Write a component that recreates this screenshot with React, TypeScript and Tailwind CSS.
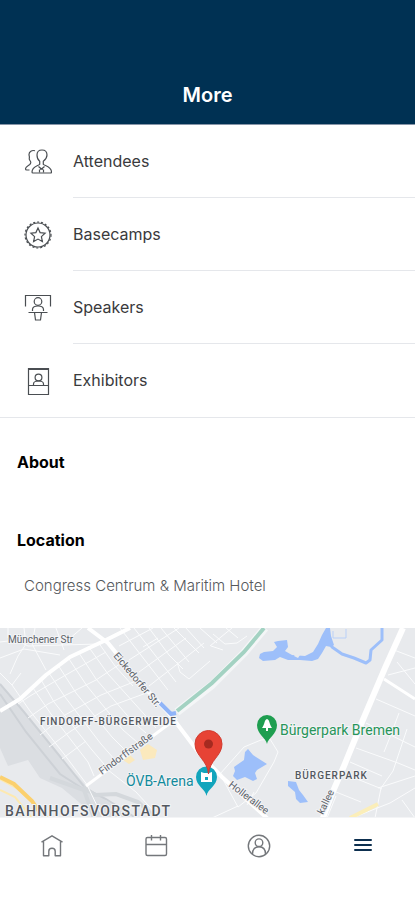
import React, { useState } from 'react';

interface IconProps {
  className?: string;
}

interface MenuItem {
  label: string;
  icon: React.FC<IconProps>;
}

const AttendeesIcon: React.FC<IconProps> = ({ className }) => (
  <svg className={className} viewBox="0 0 28 28" fill="none" stroke="currentColor" strokeWidth="1.200" strokeLinejoin="round" aria-hidden="true">
    <path d="M18 2c-3 0-5 2-5 5 0 2.600.8 4.800 2.700 6.300v3c-1.500 1.500-7.700 2-7.700 7.700 0 .7.400 1 1 1h17.500c.6 0 1-.3 1-1 0-5.700-6.700-6.200-8.200-7.700v-3C21.200 11.800 23 9.600 23 7c0-3-2-5-5-5z" />
    <path d="M11 2.800C8 1.800 5 3.500 5 6.500c0 1.500.8 2.300.3 3.500-.5 1.300.2 2 1 3 1 1.200.4 2.800-.8 3.700-2 1.300-4 2-4 4 0 .8.500 1.300 1.300 1.300h2.700" />
    <path d="M14.500 18.500l3 2.500 3-2.500M16 21.200h3M15.500 24.500v-3M19.500 24.500v-3" />
  </svg>
);

const BasecampsIcon: React.FC<IconProps> = ({ className }) => (
  <svg className={className} viewBox="0 0 28 28" fill="none" stroke="currentColor" strokeWidth="1.200" aria-hidden="true">
    <circle cx="14" cy="14" r="12" />
    <circle cx="14" cy="14" r="13" strokeDasharray="2 2" />
    <path d="M14 7l2.100 4.600 5 .6-3.700 3.400 1 5-4.400-2.500-4.400 2.500 1-5-3.700-3.400 5-.6z" />
  </svg>
);

const SpeakersIcon: React.FC<IconProps> = ({ className }) => (
  <svg className={className} viewBox="0 0 28 28" fill="none" stroke="currentColor" strokeWidth="1.200" aria-hidden="true">
    <path d="M1.500 12.500V1.500h25v11" />
    <circle cx="14" cy="7.500" r="3.800" />
    <path d="M8.500 17v-1.500c0-2 2-3.500 5.500-3.500s5.500 1.500 5.500 3.500V17M4.500 18.500h19M10.500 18.500l1 7.500h5l1-7.500" />
  </svg>
);

const ExhibitorsIcon: React.FC<IconProps> = ({ className }) => (
  <svg className={className} viewBox="0 0 28 28" fill="none" stroke="currentColor" strokeWidth="1.200" aria-hidden="true">
    <path d="M4.500 27.500V1.500h20v26zM4.500 18.500h20" />
    <path d="M4 2h21" strokeWidth="2" />
    <circle cx="14.500" cy="10.500" r="3.400" />
    <path d="M9.500 18.500v-1.500c0-1.800 2-3 5-3s5 1.200 5 3v1.500" />
  </svg>
);

const HomeIcon: React.FC<IconProps> = ({ className }) => (
  <svg className={className} viewBox="0 0 24 24" fill="none" stroke="currentColor" strokeWidth="1.400" strokeLinejoin="round" aria-hidden="true">
    <path d="M1.500 8.200L12 1.800l10.500 6.400M3.500 7.500v14.200h5.300v-4.500c0-4 6.400-4 6.400 0v4.500h5.300V7.500" />
  </svg>
);

const CalendarIcon: React.FC<IconProps> = ({ className }) => (
  <svg className={className} viewBox="0 0 24 24" fill="none" stroke="currentColor" strokeWidth="1.400" aria-hidden="true">
    <rect x="2" y="3.500" width="20.500" height="18" rx="1.500" />
    <path d="M2 10.500h20M7.500 1v5.500M16.500 1v5.500" />
  </svg>
);

const ProfileIcon: React.FC<IconProps> = ({ className }) => (
  <svg className={className} viewBox="0 0 24 24" fill="none" stroke="currentColor" strokeWidth="1.400" aria-hidden="true">
    <circle cx="12" cy="12" r="10.700" />
    <circle cx="12" cy="8.700" r="3.800" />
    <path d="M5.500 20c0-5 2.500-7.300 6.500-7.300s6.500 2.300 6.500 7.300" />
  </svg>
);

const MenuIcon: React.FC<IconProps> = ({ className }) => (
  <svg className={className} viewBox="0 0 24 24" fill="none" stroke="currentColor" strokeWidth="2" strokeLinecap="round" aria-hidden="true">
    <path d="M4 6h16M4 11h16M4 16h16" />
  </svg>
);

const LocationMap: React.FC = () => (
  <svg
    className="block w-full h-[189px]"
    viewBox="0 0 415 189"
    preserveAspectRatio="xMidYMid slice"
    role="img"
    aria-label="Map of Congress Centrum & Maritim Hotel"
    fontFamily="Roboto, sans-serif"
  >
    <rect width="415" height="190" fill="#e8eaed" />

    {/* Railway yard */}
    <path d="M0 56L20 78 52 120 88 160 132 190H98L62 160 40 150 28 132 8 138 0 120z" fill="#dbdee2" />
    <path d="M0 56l24 28 34 42 28 35 20 10 30 19M0 66l26 38 34 42 28 18" fill="none" stroke="#cdd1d6" strokeWidth="2" />
    <path d="M83 159l12 8 21-1 22 8 18 16M50 150l34 12 10 28" fill="none" stroke="#d4d8dc" strokeWidth="4" />

    {/* Side streets */}
    <g fill="none" stroke="#fafbfc" strokeWidth="1">
      <path d="M0 45l12 12 18 26 34 43 24 32M12 57l9-12M28 90l20-14 48-24 27-18M18 76l12-8 34-20 42-24M40 107l25-20 36-20 35-14M49 119l22-16 40-25 38-14M62 131l24-18" />
      <path d="M40 50l14 24 38 48 12 14M49 45l16 24 36 47 14 16M58 37l18 28 36 44 14 14M69 31l18 27 36 44 14 12M79 25l17 26 36 42 14 12M88 18l20 28 36 40 12 14M98 14l17 24 18 20M33 60l18 26 37 48 6 14" />
      <path d="M24 0l2 16-8 12-8 18M35 0l-3 16 14 26M8 0v10M0 30l24-9 36 6M56 0l8 22M0 14l16-2 12 6 70-2M62 17l20-17" />
      <path d="M119 18l34-18M129 32l50-32M139 44l47-34M149 58l31-24 24-19M120 0l34 44 14 18M134 0l42 54M149 0l20 27 14 14M161 0l28 34M174 0l25 25M186 0l18 20M143 19l15-9M177 34l3 10 9 7 21-18M200 0l17 15M210 18l22-18" />
      <path d="M87 157l16 33M108 142l28 22 24 26M213 6l12 10 12-1 10-7M211 18l12 4M226 0l12 10" />
      <path d="M220 146l24-27 17-7 9-1 8 13-4 10-18 31-18 14-18-33M238 178l-26 12M254 164l-7 13" />
      <path d="M376 71l39 17M366 95l49 24M356 120l42 15 17 7M350 134l32 14M344 146l18 7 20 8M336 164l25 10M336 168l-9 22M399 85l-9 24-6 15M407 101l-14 42-12 17-6 30M394 22l21 8M388 47l27-7M397 34l18 22M378 160l37-12M352 190l38-15 25-15M402 172l13 18" />
    </g>

    {/* Main roads */}
    <g fill="none" stroke="#ffffff" strokeLinejoin="round">
      <path d="M0 83L20 71 46 47 70 29 106 12 130 0" strokeWidth="4" />
      <path d="M88 0l20 15 34 42 26 27 19 25 12 16 23 24 46 42" strokeWidth="4" />
      <path d="M86 158l52-39 39-29" strokeWidth="3" />
      <path d="M403 0l-18 40-23 54-18 44-13 30-8 22" strokeWidth="6" />
      <path d="M384 51l31 20" strokeWidth="3" />
      <path d="M177 84L212 57 244 25 265 0" strokeWidth="8" stroke="#f4f6f7" />
    </g>
    <path d="M177 83L212 55 244 24 264 0" fill="none" stroke="#a3d2c2" strokeWidth="4" />
    <path d="M160 75l11 11 5-1" fill="none" stroke="#8fb4f8" strokeWidth="4" />

    {/* Highways */}
    <path d="M0 151l18 10 22 21 8 8M0 162l15 7 17 21" fill="none" stroke="#fde9b0" strokeWidth="2" />
    <path d="M0 149l14 7 18 17 8 12" fill="none" stroke="#fbd06e" strokeWidth="4" />
    <path d="M350 190l18-9 10-5" fill="none" stroke="#fbeeb9" strokeWidth="4" />

    {/* Buildings */}
    <path d="M140 122l8-6 9 6-2 8-12 2zM123 132l7-5 5 5-6 4z" fill="#fbe9bd" />

    {/* Water */}
    <g fill="#9dbffa">
      <path d="M260 26l4-2 9-1 4-4-3-5 4-1 9-1 1 7-3 4 7 4 13 1 8-4 5-8 4-9 4-7h4l1 8 3 9-3 2-5-1-4 7-4 6-6 2-12-1-12 0-8-3-5 3-12 1-4-3z" />
      <path d="M248 121l5 6 14 9-10 6-2 3 2 6-4 2-8-4-8 3-4-4 2-5-1-4 10-7 1-8z" />
      <path d="M288 153l8 1 3 8 4 5 5 7-8 1-4-4-1-7-7-6z" />
    </g>
    <path d="M329 10l3 9 10 7 12 4 12 5 4-3 1-10 11-10V0" fill="none" stroke="#9dbffa" strokeWidth="3" strokeLinejoin="round" />
    <path d="M294 28l2-3 4 2-2 3z" fill="#e8eaed" />
    <path d="M333 3v7h13V1" fill="none" stroke="#b9d0f8" strokeWidth="1" />

    {/* Street names */}
    <g fill="#5b6168" stroke="#f3f4f6" strokeWidth="2" paintOrder="stroke" fontSize="10">
      <text x="8" y="15">Münchener Str</text>
      <text transform="translate(113 28) rotate(50)">Eickedorfer Str.</text>
      <text transform="translate(102 147) rotate(-36)">Findorffstraße</text>
      <text transform="translate(228 158) rotate(37)">Hollerallee</text>
      <text transform="translate(323 187) rotate(-64)">kallee</text>
    </g>

    {/* District names */}
    <g fill="#53585f" stroke="#f3f4f6" strokeWidth="2" paintOrder="stroke" fontWeight="500">
      <text className="tracking-widest" x="40" y="97" fontSize="10">FINDORFF-BÜRGERWEIDE</text>
      <text className="tracking-widest" x="295" y="151" fontSize="10">BÜRGERPARK</text>
      <text className="tracking-widest" x="5" y="188" fontSize="14">BAHNHOFSVORSTADT</text>
    </g>

    {/* Places */}
    <g stroke="#f3f4f6" strokeWidth="2" paintOrder="stroke" fontSize="14">
      <text x="126" y="158" fill="#128a9c">ÖVB-Arena</text>
      <text x="280" y="107" fill="#27955a">Bürgerpark Bremen</text>
    </g>

    <path d="M267 116c-1-6-10-10-10-19a10 10 0 0 1 20 0c0 9-9 13-10 19z" fill="#1e9e50" />
    <path d="M267 91c-3 1-2 5-5 9h4v3h2v-3h4c-3-4-2-8-5-9z" fill="#ffffff" />

    <path d="M206.500 168c-1-7-10.500-10-10.500-19a10.500 10.500 0 0 1 21 0c0 9-9.500 12-10.500 19z" fill="#12a5bc" />
    <path d="M201 144l3 1h5l3-1v10H201z" fill="#ffffff" />
    <path d="M205 149h3v3h-3z" fill="#12a5bc" />

    <path d="M208.500 146c-1-14-13.500-18-13.500-30a13.500 13.500 0 0 1 27 0c0 12-12.500 16-13.500 30z" fill="#e74335" stroke="#d23b2f" />
    <circle cx="208.500" cy="116" r="4.500" fill="#a52a20" />
  </svg>
);

const menuItems: MenuItem[] = [
  { label: 'Attendees', icon: AttendeesIcon },
  { label: 'Basecamps', icon: BasecampsIcon },
  { label: 'Speakers', icon: SpeakersIcon },
  { label: 'Exhibitors', icon: ExhibitorsIcon },
];

const tabs = [
  { value: 'home', label: 'Home', icon: HomeIcon },
  { value: 'agenda', label: 'Agenda', icon: CalendarIcon },
  { value: 'profile', label: 'Profile', icon: ProfileIcon },
  { value: 'more', label: 'More', icon: MenuIcon },
];

const App: React.FC = () => {
  const [activeTab, setActiveTab] = useState('more');

  return (
    <div className="min-h-screen flex flex-col bg-white text-black font-['Inter',sans-serif]">
      {/* HEADER */}
      <header className="bg-[#003153] border-b border-[#8795a8] pt-[79px] pb-[13px] text-center">
        <h1 className="text-xl leading-8 font-semibold text-white">More</h1>
      </header>

      <main className="flex-grow">
        {/* MENU */}
        <ul className="border-b border-gray-200">
          {menuItems.map((item, index) => (
            <li key={item.label}>
              <button type="button" className="w-full flex items-center pl-6 text-left">
                <item.icon className="w-7 h-7 mr-[21px] shrink-0 text-[#4a4e52]" />
                <span
                  className={`flex-1 py-6 text-base leading-6 text-[#3a3a3c] border-b ${
                    index < menuItems.length - 1 ? 'border-gray-200' : 'border-transparent'
                  }`}
                >
                  {item.label}
                </span>
              </button>
            </li>
          ))}
        </ul>

        {/* ABOUT */}
        <section className="px-[17px] pt-8">
          <h2 className="text-base leading-6 font-bold">About</h2>
        </section>

        {/* LOCATION */}
        <section className="pt-[54px]">
          <h2 className="px-[17px] text-base leading-6 font-bold">Location</h2>
          <p className="px-6 pt-[22px] pb-[30px] text-[15px] leading-6 font-light text-[#55585c]">
            Congress Centrum & Maritim Hotel
          </p>
          <LocationMap />
        </section>
      </main>

      {/* TAB BAR */}
      <nav className="grid grid-cols-4 pt-4 pb-[42px] border-t border-gray-100">
        {tabs.map((tab) => (
          <button
            key={tab.value}
            type="button"
            onClick={() => setActiveTab(tab.value)}
            className={`flex justify-center ${activeTab === tab.value ? 'text-[#0d2f4f]' : 'text-[#74777b]'}`}
            aria-label={tab.label}
            aria-current={activeTab === tab.value ? 'page' : undefined}
          >
            <tab.icon className="w-6 h-6" />
          </button>
        ))}
      </nav>
    </div>
  );
};

export default App;
